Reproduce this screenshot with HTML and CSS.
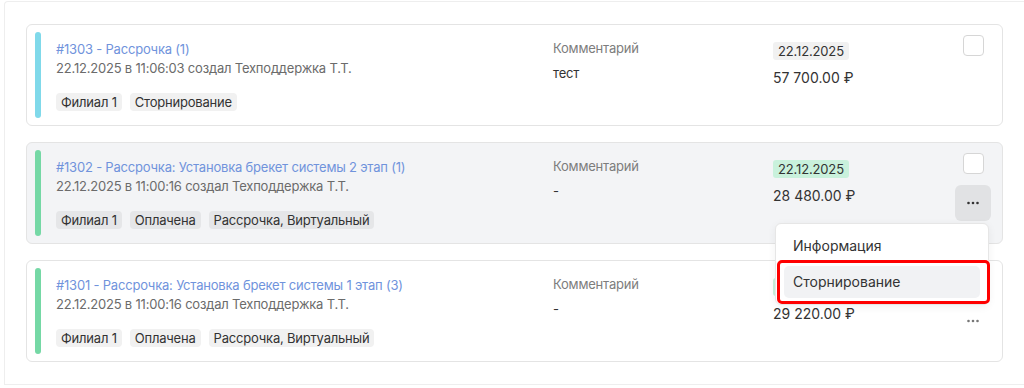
FILE: index.html
```html
<!DOCTYPE html>
<html lang="ru">
<head>
<meta charset="utf-8">
<title>Платежи</title>
<link rel="stylesheet" href="styles.css">
</head>
<body>
<div class="panel">
  <div class="list">
    <div class="card">
      <div class="bar bar-cyan"></div>
      <div class="main">
        <a class="title">#1303 - Рассрочка (1)</a>
        <div class="meta">22.12.2025 в 11:06:03 создал Техподдержка Т.Т.</div>
        <div class="tags">
          <span class="tag">Филиал 1</span>
          <span class="tag">Сторнирование</span>
        </div>
      </div>
      <div class="comment">
        <div class="label">Комментарий</div>
        <div class="value">тест</div>
      </div>
      <div class="money">
        <span class="date">22.12.2025</span>
        <div class="amount">57 700.00 ₽</div>
      </div>
      <div class="actions">
        <span class="check"></span>
      </div>
    </div>

    <div class="card card-hover">
      <div class="bar bar-green"></div>
      <div class="main">
        <a class="title">#1302 - Рассрочка: Установка брекет системы 2 этап (1)</a>
        <div class="meta">22.12.2025 в 11:00:16 создал Техподдержка Т.Т.</div>
        <div class="tags">
          <span class="tag">Филиал 1</span>
          <span class="tag">Оплачена</span>
          <span class="tag">Рассрочка, Виртуальный</span>
        </div>
      </div>
      <div class="comment">
        <div class="label">Комментарий</div>
        <div class="value">-</div>
      </div>
      <div class="money">
        <span class="date date-green">22.12.2025</span>
        <div class="amount">28 480.00 ₽</div>
      </div>
      <div class="actions">
        <span class="check"></span>
        <span class="dots dots-active">
          <svg width="14" height="4" viewBox="0 0 14 4"><circle cx="2.5" cy="2" r="1.3"/><circle cx="7" cy="2" r="1.3"/><circle cx="11.5" cy="2" r="1.3"/></svg>
        </span>
        <div class="menu">
          <div class="menu-item">Информация</div>
          <div class="menu-item menu-item-hover">Сторнирование</div>
          <div class="highlight"></div>
        </div>
      </div>
    </div>

    <div class="card">
      <div class="bar bar-green"></div>
      <div class="main">
        <a class="title">#1301 - Рассрочка: Установка брекет системы 1 этап (3)</a>
        <div class="meta">22.12.2025 в 11:00:16 создал Техподдержка Т.Т.</div>
        <div class="tags">
          <span class="tag">Филиал 1</span>
          <span class="tag">Оплачена</span>
          <span class="tag">Рассрочка, Виртуальный</span>
        </div>
      </div>
      <div class="comment">
        <div class="label">Комментарий</div>
        <div class="value">-</div>
      </div>
      <div class="money">
        <span class="date date-green">22.12.2025</span>
        <div class="amount">29 220.00 ₽</div>
      </div>
      <div class="actions">
        <span class="check"></span>
        <span class="dots">
          <svg width="14" height="4" viewBox="0 0 14 4"><circle cx="2.5" cy="2" r="1.3"/><circle cx="7" cy="2" r="1.3"/><circle cx="11.5" cy="2" r="1.3"/></svg>
        </span>
      </div>
    </div>
  </div>
</div>
</body>
</html>
```

FILE: styles.css
```css
* { box-sizing: border-box; }

html, body {
  margin: 0;
  padding: 0;
  background: #ffffff;
  font-family: Inter, "Noto Sans", "Liberation Sans", sans-serif;
  color: #333333;
  overflow: hidden;
}

.panel {
  margin: 1px 0 0 4px;
  height: 384px;
  border-top: 1px solid #eeeeee;
  border-left: 1px solid #eeeeee;
  border-bottom: 1px solid #eeeeee;
  border-top-left-radius: 4px;
  padding: 22px 21px 0 21px;
}

.list {
  display: flex;
  flex-direction: column;
  gap: 16px;
}

.card {
  display: flex;
  height: 102px;
  border: 1px solid #e4e4e4;
  border-radius: 6px;
  background: #ffffff;
  padding: 7px 11px 7px 8px;
}

.card-hover {
  background: #f3f4f6;
}

.bar {
  width: 6px;
  flex: 0 0 6px;
  border-radius: 3px;
}
.bar-cyan { background: #80d9ea; }
.bar-green { background: #75d8a5; }

.main {
  width: 512px;
  flex: 0 0 512px;
  padding: 8px 0 0 15px;
  letter-spacing: -0.2px;
}

.title {
  display: block;
  font-size: 13px;
  line-height: 19px;
  color: #7093dc;
  text-decoration: none;
  white-space: nowrap;
}

.meta {
  font-size: 13px;
  line-height: 19px;
  color: #6b6b6b;
  white-space: nowrap;
}

.tags {
  display: flex;
  gap: 8px;
  margin-top: 15px;
}

.tag {
  height: 18px;
  line-height: 18px;
  padding: 0 5px;
  border-radius: 4px;
  background: #f1f1f1;
  font-size: 13px;
  color: #333333;
  white-space: nowrap;
}
.card-hover .tag { background: #e5e6e8; }

.comment {
  width: 220px;
  flex: 0 0 220px;
  padding-top: 7px;
  letter-spacing: -0.2px;
}

.label {
  font-size: 13px;
  line-height: 18px;
  color: #7d7d7d;
}

.value {
  font-size: 13px;
  line-height: 18px;
  margin-top: 7px;
  color: #333333;
}

.money {
  flex: 1;
  padding-top: 8px;
}

.date {
  display: inline-block;
  height: 18px;
  line-height: 18px;
  padding: 0 5px;
  border-radius: 3px;
  background: #f1f1f1;
  font-size: 13px;
  letter-spacing: -0.15px;
  color: #333333;
}
.date-green { background: #c9f1dc; }

.amount {
  margin-top: 7px;
  font-size: 14px;
  line-height: 22px;
  color: #333333;
}

.actions {
  position: relative;
  width: 36px;
  flex: 0 0 36px;
  display: flex;
  flex-direction: column;
  align-items: center;
  padding-top: 3px;
}

.check {
  display: block;
  width: 21px;
  height: 21px;
  border: 1px solid #d6d6d6;
  border-radius: 4px;
  background: #ffffff;
}

.dots {
  display: flex;
  align-items: center;
  justify-content: center;
  width: 36px;
  height: 36px;
  margin-top: 11px;
  border-radius: 6px;
  fill: #777777;
}
.dots-active {
  background: #e1e2e4;
  fill: #333333;
}

.menu {
  position: absolute;
  top: 73px;
  right: 2px;
  width: 214px;
  padding: 6px 8px;
  background: #ffffff;
  border: 1px solid #e6e6e6;
  border-radius: 6px;
  box-shadow: 0 2px 8px rgba(0, 0, 0, 0.06);
  display: flex;
  flex-direction: column;
  gap: 4px;
  z-index: 5;
}

.menu-item {
  height: 32px;
  line-height: 32px;
  padding: 0 9px;
  border-radius: 5px;
  font-size: 14px;
  color: #333333;
  white-space: nowrap;
}
.menu-item-hover { background: #f1f2f4; }

.highlight {
  position: absolute;
  left: 1px;
  right: -2px;
  top: 36px;
  height: 44px;
  border: 3px solid #ff0000;
  border-radius: 5px;
  pointer-events: none;
}
```
